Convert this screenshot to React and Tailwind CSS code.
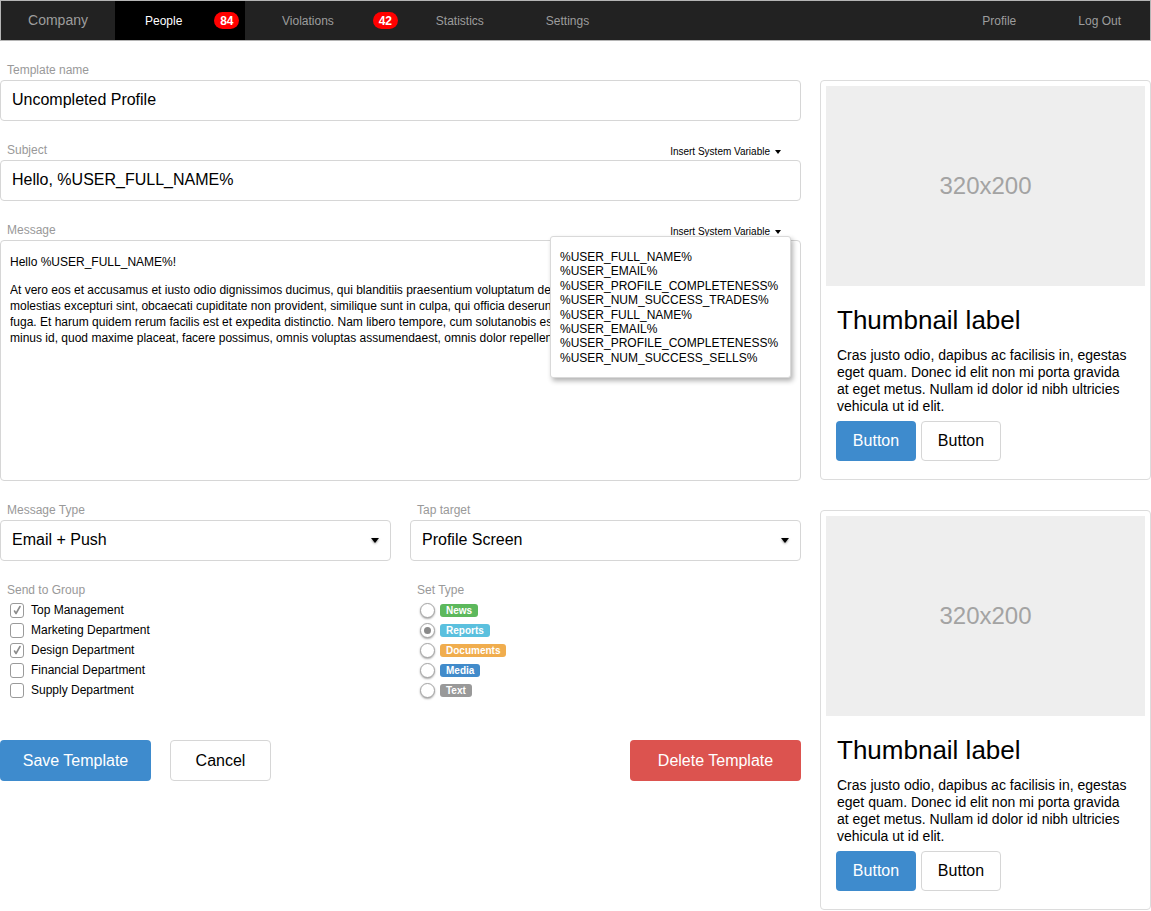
import React from "react";

const groups = [
  { label: "Top Management", checked: true },
  { label: "Marketing Department", checked: false },
  { label: "Design Department", checked: true },
  { label: "Financial Department", checked: false },
  { label: "Supply Department", checked: false },
];

const types = [
  { label: "News", color: "bg-[#5cb85c]" },
  { label: "Reports", color: "bg-[#5bc0de]", checked: true },
  { label: "Documents", color: "bg-[#f0ad4e]" },
  { label: "Media", color: "bg-[#428bca]" },
  { label: "Text", color: "bg-[#999999]" },
];

const variables = [
  "%USER_FULL_NAME%",
  "%USER_EMAIL%",
  "%USER_PROFILE_COMPLETENESS%",
  "%USER_NUM_SUCCESS_TRADES%",
  "%USER_FULL_NAME%",
  "%USER_EMAIL%",
  "%USER_PROFILE_COMPLETENESS%",
  "%USER_NUM_SUCCESS_SELLS%",
];

// only the part of the message not covered by the open menu
const messageLines = [
  "At vero eos et accusamus et iusto odio dignissimos ducimus, qui blanditiis praesentium voluptatum de",
  "molestias excepturi sint, obcaecati cupiditate non provident, similique sunt in culpa, qui officia deserun",
  "fuga. Et harum quidem rerum facilis est et expedita distinctio. Nam libero tempore, cum solutanobis es",
  "minus id, quod maxime placeat, facere possimus, omnis voluptas assumendaest, omnis dolor repellen",
];

function Caret({ small }) {
  return small ? (
    <span className="ml-[5px] inline-block w-0 h-0 border-l-[3.5px] border-r-[3.5px] border-t-[4px] border-l-transparent border-r-transparent border-t-black" />
  ) : (
    <span className="inline-block w-0 h-0 border-l-[4.5px] border-r-[4.5px] border-t-[5px] border-l-transparent border-r-transparent border-t-black drop-shadow-[0_1px_1px_rgba(0,0,0,0.4)]" />
  );
}

function FieldLabel({ children, insert }) {
  return (
    <div className="flex items-center justify-between h-[18px]">
      <span className="pl-[7px] text-[12px] leading-[16px] text-[#999] -translate-y-[1px]">{children}</span>
      {insert && (
        <span className="pr-[20px] text-[10px] leading-[12px] text-black flex items-center translate-y-[1px]">
          Insert System Variable
          <Caret small />
        </span>
      )}
    </div>
  );
}

function TextBox({ children }) {
  return (
    <div className="h-[41px] border border-[#d6d6d6] rounded-[4px] px-[11px] flex items-center text-[16px] text-black">
      <span className="-translate-y-[1px]">{children}</span>
    </div>
  );
}

function SelectBox({ children }) {
  return (
    <div className="h-[41px] border border-[#d6d6d6] rounded-[4px] pl-[11px] pr-[11px] flex items-center justify-between text-[16px] text-black">
      <span className="-translate-y-[1px]">{children}</span>
      <Caret />
    </div>
  );
}

function Thumbnail() {
  return (
    <div className="w-[331px] border border-[#dcdcdc] rounded-[4px] p-[5px]">
      <div className="h-[200px] bg-[#eeeeee] flex items-center justify-center text-[24px] text-[#a3a3a3]">
        320x200
      </div>
      <div className="pl-[11px] pr-[16px] pt-[9px] pb-[13px]">
        <h3 className="mt-[10px] text-[26px] leading-[31px] text-black">Thumbnail label</h3>
        <p className="mt-[11px] text-[14px] leading-[17px] text-black">
          Cras justo odio, dapibus ac facilisis in, egestas eget quam. Donec id elit non mi porta gravida at eget metus. Nullam id dolor id nibh ultricies vehicula ut id elit.
        </p>
        <div className="mt-[6px] flex gap-[5px] -ml-[1px]">
          <button className="w-[80px] h-[40px] rounded-[4px] bg-[#3e8bcd] text-white text-[16px]">Button</button>
          <button className="w-[80px] h-[40px] rounded-[4px] border border-[#d6d6d6] bg-white text-black text-[16px]">Button</button>
        </div>
      </div>
    </div>
  );
}

export default function App() {
  return (
    <div className="w-[1151px] min-h-[911px] bg-white font-['Liberation_Sans',Arial,sans-serif]">
      {/* top bar */}
      <nav className="h-[41px] bg-[#222222] border border-[#b5b5b5] flex items-center text-[12px] text-[#9d9d9d]">
        <div className="w-[114px] h-full flex items-center justify-center text-[14px]">Company</div>
        <div className="w-[130px] h-full bg-black flex items-center pl-[30px]">
          <span className="text-white">People</span>
          <span className="ml-[32px] h-[17px] w-[25px] rounded-full bg-[#ff0000] text-white text-[12px] font-bold flex items-center justify-center">84</span>
        </div>
        <span className="ml-[37px]">Violations</span>
        <span className="ml-[39px] h-[17px] w-[25px] rounded-full bg-[#ff0000] text-white text-[12px] font-bold flex items-center justify-center">42</span>
        <span className="ml-[38px]">Statistics</span>
        <span className="ml-[62px]">Settings</span>
        <div className="ml-auto flex items-center pr-[29px]">
          <span>Profile</span>
          <span className="ml-[62px]">Log Out</span>
        </div>
      </nav>

      <div className="flex">
        {/* form column */}
        <div className="w-[801px] pt-[21px]">
          <FieldLabel>Template name</FieldLabel>
          <TextBox>Uncompleted Profile</TextBox>

          <div className="mt-[21px]">
            <FieldLabel insert>Subject</FieldLabel>
            <TextBox>Hello, %USER_FULL_NAME%</TextBox>
          </div>

          <div className="mt-[21px] relative">
            <FieldLabel insert>Message</FieldLabel>
            <div className="h-[241px] border border-[#d6d6d6] rounded-[4px] pt-[13px] px-[9px] text-[12px] leading-[16px] text-black overflow-hidden">
              <div>Hello %USER_FULL_NAME%!</div>
              <div className="mt-[12px] w-[540px] whitespace-nowrap overflow-hidden">
                {messageLines.map((line, i) => (
                  <div key={i}>{line}</div>
                ))}
              </div>
            </div>
            <div className="absolute top-[14px] left-[550px] w-[241px] bg-white border border-[#d9d9d9] rounded-[3px] shadow-[2px_3px_5px_rgba(0,0,0,0.3)] pt-[13px] pb-[12px] px-[9px] text-[12px] leading-[14.4px] text-black">
              {variables.map((v, i) => (
                <div key={i}>{v}</div>
              ))}
            </div>
          </div>

          <div className="mt-[21px] grid grid-cols-2 gap-x-[19px]">
            <div>
              <FieldLabel>Message Type</FieldLabel>
              <SelectBox>Email + Push</SelectBox>
            </div>
            <div>
              <FieldLabel>Tap target</FieldLabel>
              <SelectBox>Profile Screen</SelectBox>
            </div>

            <div className="mt-[21px]">
              <FieldLabel>Send to Group</FieldLabel>
              {groups.map((g) => (
                <div key={g.label} className="h-[20px] flex items-center pl-[10px] text-[12px] text-black">
                  <span className="w-[14px] h-[15px] rounded-[3px] border border-[#9a9a9a] bg-white flex items-center justify-center">
                    {g.checked && (
                      <svg width="10" height="10" viewBox="0 0 10 10">
                        <path d="M2.5 6 L4 8.5 L8 1.5" fill="none" stroke="#8c8c8c" strokeWidth="1.6" strokeLinecap="round" strokeLinejoin="round" />
                      </svg>
                    )}
                  </span>
                  <span className="ml-[7px]">{g.label}</span>
                </div>
              ))}
            </div>
            <div className="mt-[21px]">
              <FieldLabel>Set Type</FieldLabel>
              {types.map((t) => (
                <div key={t.label} className="h-[20px] flex items-center pl-[10px]">
                  <span className="w-[15px] h-[15px] rounded-full border border-[#a5a5a5] bg-white shadow-[0_1px_2px_rgba(0,0,0,0.35)] flex items-center justify-center">
                    {t.checked && <span className="w-[7px] h-[7px] rounded-full bg-[#8a8a8a]" />}
                  </span>
                  <span className={`ml-[5px] h-[13px] px-[6px] rounded-[3px] ${t.color} text-white text-[10px] font-bold leading-[13px]`}>
                    {t.label}
                  </span>
                </div>
              ))}
            </div>
          </div>

          <div className="mt-[40px] flex items-center">
            <button className="w-[151px] h-[41px] rounded-[4px] bg-[#3e8bcd] text-white text-[16px]">Save Template</button>
            <button className="ml-[19px] w-[101px] h-[41px] rounded-[4px] border border-[#d6d6d6] bg-white text-black text-[16px]">Cancel</button>
            <button className="ml-auto w-[171px] h-[41px] rounded-[4px] bg-[#dc534f] text-white text-[16px]">Delete Template</button>
          </div>
        </div>

        {/* thumbnails column */}
        <div className="ml-[19px] pt-[39px] flex flex-col gap-[30px]">
          <Thumbnail />
          <Thumbnail />
        </div>
      </div>
    </div>
  );
}
